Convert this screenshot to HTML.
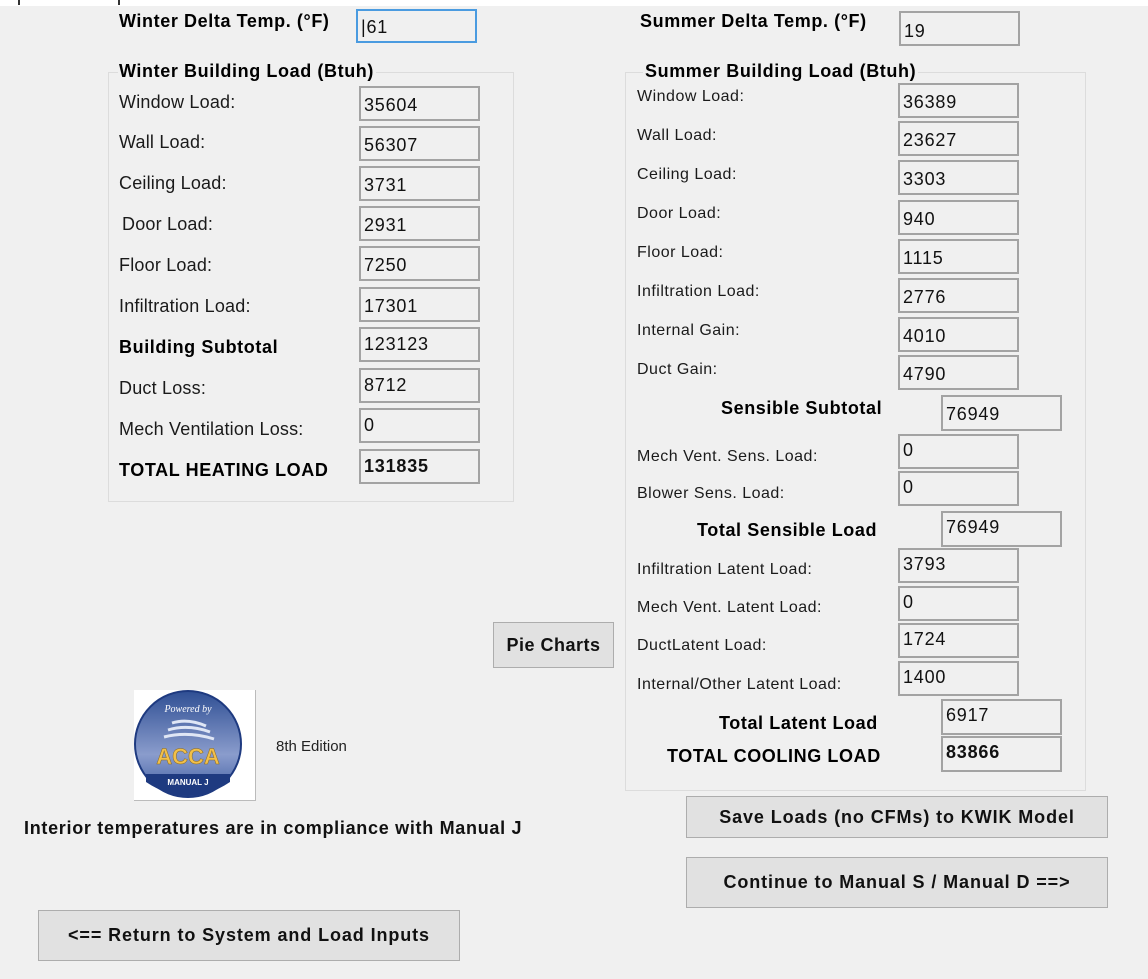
<!DOCTYPE html>
<html><head><meta charset="utf-8"><style>
html,body{margin:0;padding:0}
body{width:1148px;height:979px;background:#f0f0f0;position:relative;overflow:hidden;font-family:"Liberation Sans",Arial,sans-serif;color:#000}
.a{position:absolute;white-space:nowrap}
.l{font-size:18px;color:#1a1a1a;letter-spacing:0.2px}
.s{font-size:16px;color:#1a1a1a;letter-spacing:0.5px}
.b{font-weight:bold;font-size:18px;letter-spacing:0.6px}
.tb{position:absolute;box-sizing:border-box;border:2px solid #a3a3a3;background:#f0f0f0;font-size:18px;letter-spacing:0.8px;padding:2px 0 0 3px;color:#111}
.grp{position:absolute;border:1px solid #dcdcdc;box-sizing:border-box}
.btn{position:absolute;box-sizing:border-box;border:1px solid #adadad;background:#e1e1e1;font-weight:bold;font-size:18px;letter-spacing:0.9px;text-align:center;color:#111}
</style></head><body>
<div class="a" style="left:0;top:0;width:1148px;height:6px;background:#fff"></div>
<div class="a" style="left:18px;top:0;width:2px;height:5px;background:#333"></div>
<div class="a" style="left:118px;top:0;width:2px;height:5px;background:#333"></div>

<div class="a b" style="left:119px;top:11px">Winter Delta Temp. (°F)</div>
<div class="tb" style="left:356px;top:9px;width:121px;height:34px;border:2px solid #4a9be0;padding-top:6px">|61</div>
<div class="a b" style="left:640px;top:11px">Summer Delta Temp. (°F)</div>
<div class="tb" style="left:899px;top:11px;width:121px;height:35px;padding-top:8px">19</div>

<div class="grp" style="left:108px;top:72px;width:406px;height:430px"></div>
<div class="a b" style="left:118px;top:61px;background:#f0f0f0;padding:0 2px 0 1px">Winter Building Load (Btuh)</div>
<div class="a l" style="left:119px;top:92px">Window Load:</div><div class="tb" style="left:359px;top:86px;width:121px;height:35px;padding-top:7px">35604</div>
<div class="a l" style="left:119px;top:132px">Wall Load:</div><div class="tb" style="left:359px;top:126px;width:121px;height:35px;padding-top:7px">56307</div>
<div class="a l" style="left:119px;top:173px">Ceiling Load:</div><div class="tb" style="left:359px;top:166px;width:121px;height:35px;padding-top:7px">3731</div>
<div class="a l" style="left:122px;top:214px">Door Load:</div><div class="tb" style="left:359px;top:206px;width:121px;height:35px;padding-top:7px">2931</div>
<div class="a l" style="left:119px;top:255px">Floor Load:</div><div class="tb" style="left:359px;top:246px;width:121px;height:35px;padding-top:7px">7250</div>
<div class="a l" style="left:119px;top:296px">Infiltration Load:</div><div class="tb" style="left:359px;top:287px;width:121px;height:35px;padding-top:7px">17301</div>
<div class="a b" style="left:119px;top:337px">Building Subtotal</div><div class="tb" style="left:359px;top:327px;width:121px;height:35px;padding-top:5px">123123</div>
<div class="a l" style="left:119px;top:378px">Duct Loss:</div><div class="tb" style="left:359px;top:368px;width:121px;height:35px;padding-top:5px">8712</div>
<div class="a l" style="left:119px;top:419px">Mech Ventilation Loss:</div><div class="tb" style="left:359px;top:408px;width:121px;height:35px;padding-top:5px">0</div>
<div class="a b" style="left:119px;top:460px">TOTAL HEATING LOAD</div><div class="tb" style="left:359px;top:449px;width:121px;height:35px;padding-top:5px;font-weight:bold">131835</div>

<div class="grp" style="left:625px;top:72px;width:461px;height:719px"></div>
<div class="a b" style="left:643px;top:61px;background:#f0f0f0;padding:0 2px">Summer Building Load (Btuh)</div>
<div class="a s" style="left:637px;top:88px">Window Load:</div><div class="tb" style="left:898px;top:83px;width:121px;height:35px;padding-top:7px">36389</div>
<div class="a s" style="left:637px;top:127px">Wall Load:</div><div class="tb" style="left:898px;top:121px;width:121px;height:35px;padding-top:7px">23627</div>
<div class="a s" style="left:637px;top:166px">Ceiling Load:</div><div class="tb" style="left:898px;top:160px;width:121px;height:35px;padding-top:7px">3303</div>
<div class="a s" style="left:637px;top:205px">Door Load:</div><div class="tb" style="left:898px;top:200px;width:121px;height:35px;padding-top:7px">940</div>
<div class="a s" style="left:637px;top:244px">Floor Load:</div><div class="tb" style="left:898px;top:239px;width:121px;height:35px;padding-top:7px">1115</div>
<div class="a s" style="left:637px;top:283px">Infiltration Load:</div><div class="tb" style="left:898px;top:278px;width:121px;height:35px;padding-top:7px">2776</div>
<div class="a s" style="left:637px;top:322px">Internal Gain:</div><div class="tb" style="left:898px;top:317px;width:121px;height:35px;padding-top:7px">4010</div>
<div class="a s" style="left:637px;top:361px">Duct Gain:</div><div class="tb" style="left:898px;top:355px;width:121px;height:35px;padding-top:7px">4790</div>
<div class="a b" style="left:721px;top:398px">Sensible Subtotal</div><div class="tb" style="left:941px;top:395px;width:121px;height:36px;padding-top:7px">76949</div>
<div class="a s" style="left:637px;top:448px">Mech Vent. Sens. Load:</div><div class="tb" style="left:898px;top:434px;width:121px;height:35px;padding-top:4px">0</div>
<div class="a s" style="left:637px;top:485px">Blower Sens. Load:</div><div class="tb" style="left:898px;top:471px;width:121px;height:35px;padding-top:4px">0</div>
<div class="a b" style="left:697px;top:520px">Total Sensible Load</div><div class="tb" style="left:941px;top:511px;width:121px;height:36px;padding-top:4px">76949</div>
<div class="a s" style="left:637px;top:561px">Infiltration Latent Load:</div><div class="tb" style="left:898px;top:548px;width:121px;height:35px;padding-top:4px">3793</div>
<div class="a s" style="left:637px;top:599px">Mech Vent. Latent Load:</div><div class="tb" style="left:898px;top:586px;width:121px;height:35px;padding-top:4px">0</div>
<div class="a s" style="left:637px;top:637px">DuctLatent Load:</div><div class="tb" style="left:898px;top:623px;width:121px;height:35px;padding-top:4px">1724</div>
<div class="a s" style="left:637px;top:676px">Internal/Other Latent Load:</div><div class="tb" style="left:898px;top:661px;width:121px;height:35px;padding-top:4px">1400</div>
<div class="a b" style="left:719px;top:713px">Total Latent Load</div><div class="tb" style="left:941px;top:699px;width:121px;height:36px;padding-top:4px">6917</div>
<div class="a b" style="left:667px;top:746px">TOTAL COOLING LOAD</div><div class="tb" style="left:941px;top:736px;width:121px;height:36px;padding-top:4px;font-weight:bold">83866</div>

<div class="btn" style="left:493px;top:622px;width:121px;height:46px;line-height:44px;letter-spacing:0.5px">Pie Charts</div>
<div class="btn" style="left:686px;top:796px;width:422px;height:42px;line-height:40px">Save Loads (no CFMs) to KWIK Model</div>
<div class="btn" style="left:686px;top:857px;width:422px;height:51px;line-height:49px">Continue to Manual S / Manual D ==&gt;</div>
<div class="btn" style="left:38px;top:910px;width:422px;height:51px;line-height:49px">&lt;== Return to System and Load Inputs</div>

<div class="a" style="left:134px;top:690px;width:121px;height:110px;background:#fff;border-right:1px solid #bbb;border-bottom:1px solid #bbb"></div>
<svg class="a" style="left:134px;top:690px" width="121" height="110" viewBox="0 0 121 110">
<defs><linearGradient id="g" x1="0" y1="0" x2="0" y2="1"><stop offset="0" stop-color="#2f4f94"/><stop offset="0.6" stop-color="#8a9ccc"/><stop offset="1" stop-color="#3b5aa0"/></linearGradient></defs>
<circle cx="54" cy="54" r="53" fill="url(#g)" stroke="#1e3a80" stroke-width="2"/>
<path d="M12 84 H96 V92 Q75 106 54 106 Q33 106 12 92Z" fill="#1e3a80"/>
<text x="54" y="22" font-size="10" font-style="italic" fill="#fff" text-anchor="middle" font-family="Liberation Serif,serif">Powered by</text>
<path d="M38 33 Q54 28 72 36 M34 40 Q54 34 76 42 M30 47 Q54 41 80 49" stroke="#dfe6f5" stroke-width="3" fill="none"/>
<text x="54" y="74" font-size="22" font-weight="bold" fill="#f2c04a" text-anchor="middle" stroke="#8a6a20" stroke-width="0.5">ACCA</text>
<text x="54" y="95" font-size="8" font-weight="bold" fill="#fff" text-anchor="middle">MANUAL J</text>
</svg>
<div class="a" style="left:276px;top:738px;font-size:15px;color:#222">8th Edition</div>
<div class="a" style="left:24px;top:818px;font-size:18px;letter-spacing:0.7px;font-weight:bold;color:#111">Interior temperatures are in compliance with Manual J</div>
</body></html>
